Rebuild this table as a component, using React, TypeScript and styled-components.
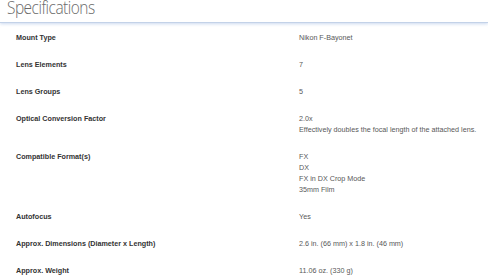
import React from "react";
import styled, { createGlobalStyle } from "styled-components";

const GlobalStyle = createGlobalStyle`
  body {
    margin: 0;
    background: #ffffff;
    font-family: "Liberation Sans", Arial, sans-serif;
  }
`;

const Page = styled.div`
  width: 488px;
  height: 276px;
  overflow: hidden;
  background: #ffffff;
`;

const Header = styled.div`
  height: 22px;
  padding-left: 7px;
  border-bottom: 1px solid #c3d2e8;
  box-shadow: 0 1px 3px rgba(160, 185, 225, 0.55);
`;

const Title = styled.h2`
  margin: 0;
  font-family: "Open Sans", sans-serif;
  font-weight: 300;
  font-size: 18px;
  letter-spacing: -0.6px;
  line-height: 15px;
  color: #6a6a6a;
  transform: scaleX(0.86);
  transform-origin: left center;
`;

const Table = styled.div`
  display: flex;
  flex-direction: column;
  padding-top: 1px;
`;

const Row = styled.div`
  display: grid;
  grid-template-columns: 283px 1fr;
  padding: 8px 0 8px 16px;
  font-size: 7.2px;
  line-height: 11px;
`;

const Label = styled.div`
  font-weight: 700;
  color: #333333;
`;

const Value = styled.div`
  color: #585858;
  display: flex;
  flex-direction: column;
`;

const specs: { label: string; values: string[] }[] = [
  { label: "Mount Type", values: ["Nikon F-Bayonet"] },
  { label: "Lens Elements", values: ["7"] },
  { label: "Lens Groups", values: ["5"] },
  {
    label: "Optical Conversion Factor",
    values: ["2.0x", "Effectively doubles the focal length of the attached lens."],
  },
  {
    label: "Compatible Format(s)",
    values: ["FX", "DX", "FX in DX Crop Mode", "35mm Film"],
  },
  { label: "Autofocus", values: ["Yes"] },
  {
    label: "Approx. Dimensions (Diameter x Length)",
    values: ["2.6 in. (66 mm) x 1.8 in. (46 mm)"],
  },
  { label: "Approx. Weight", values: ["11.06 oz. (330 g)"] },
];

export default function App() {
  return (
    <Page>
      <GlobalStyle />
      <Header>
        <Title>Specifications</Title>
      </Header>
      <Table>
        {specs.map((s) => (
          <Row key={s.label}>
            <Label>{s.label}</Label>
            <Value>
              {s.values.map((v) => (
                <span key={v}>{v}</span>
              ))}
            </Value>
          </Row>
        ))}
      </Table>
    </Page>
  );
}
